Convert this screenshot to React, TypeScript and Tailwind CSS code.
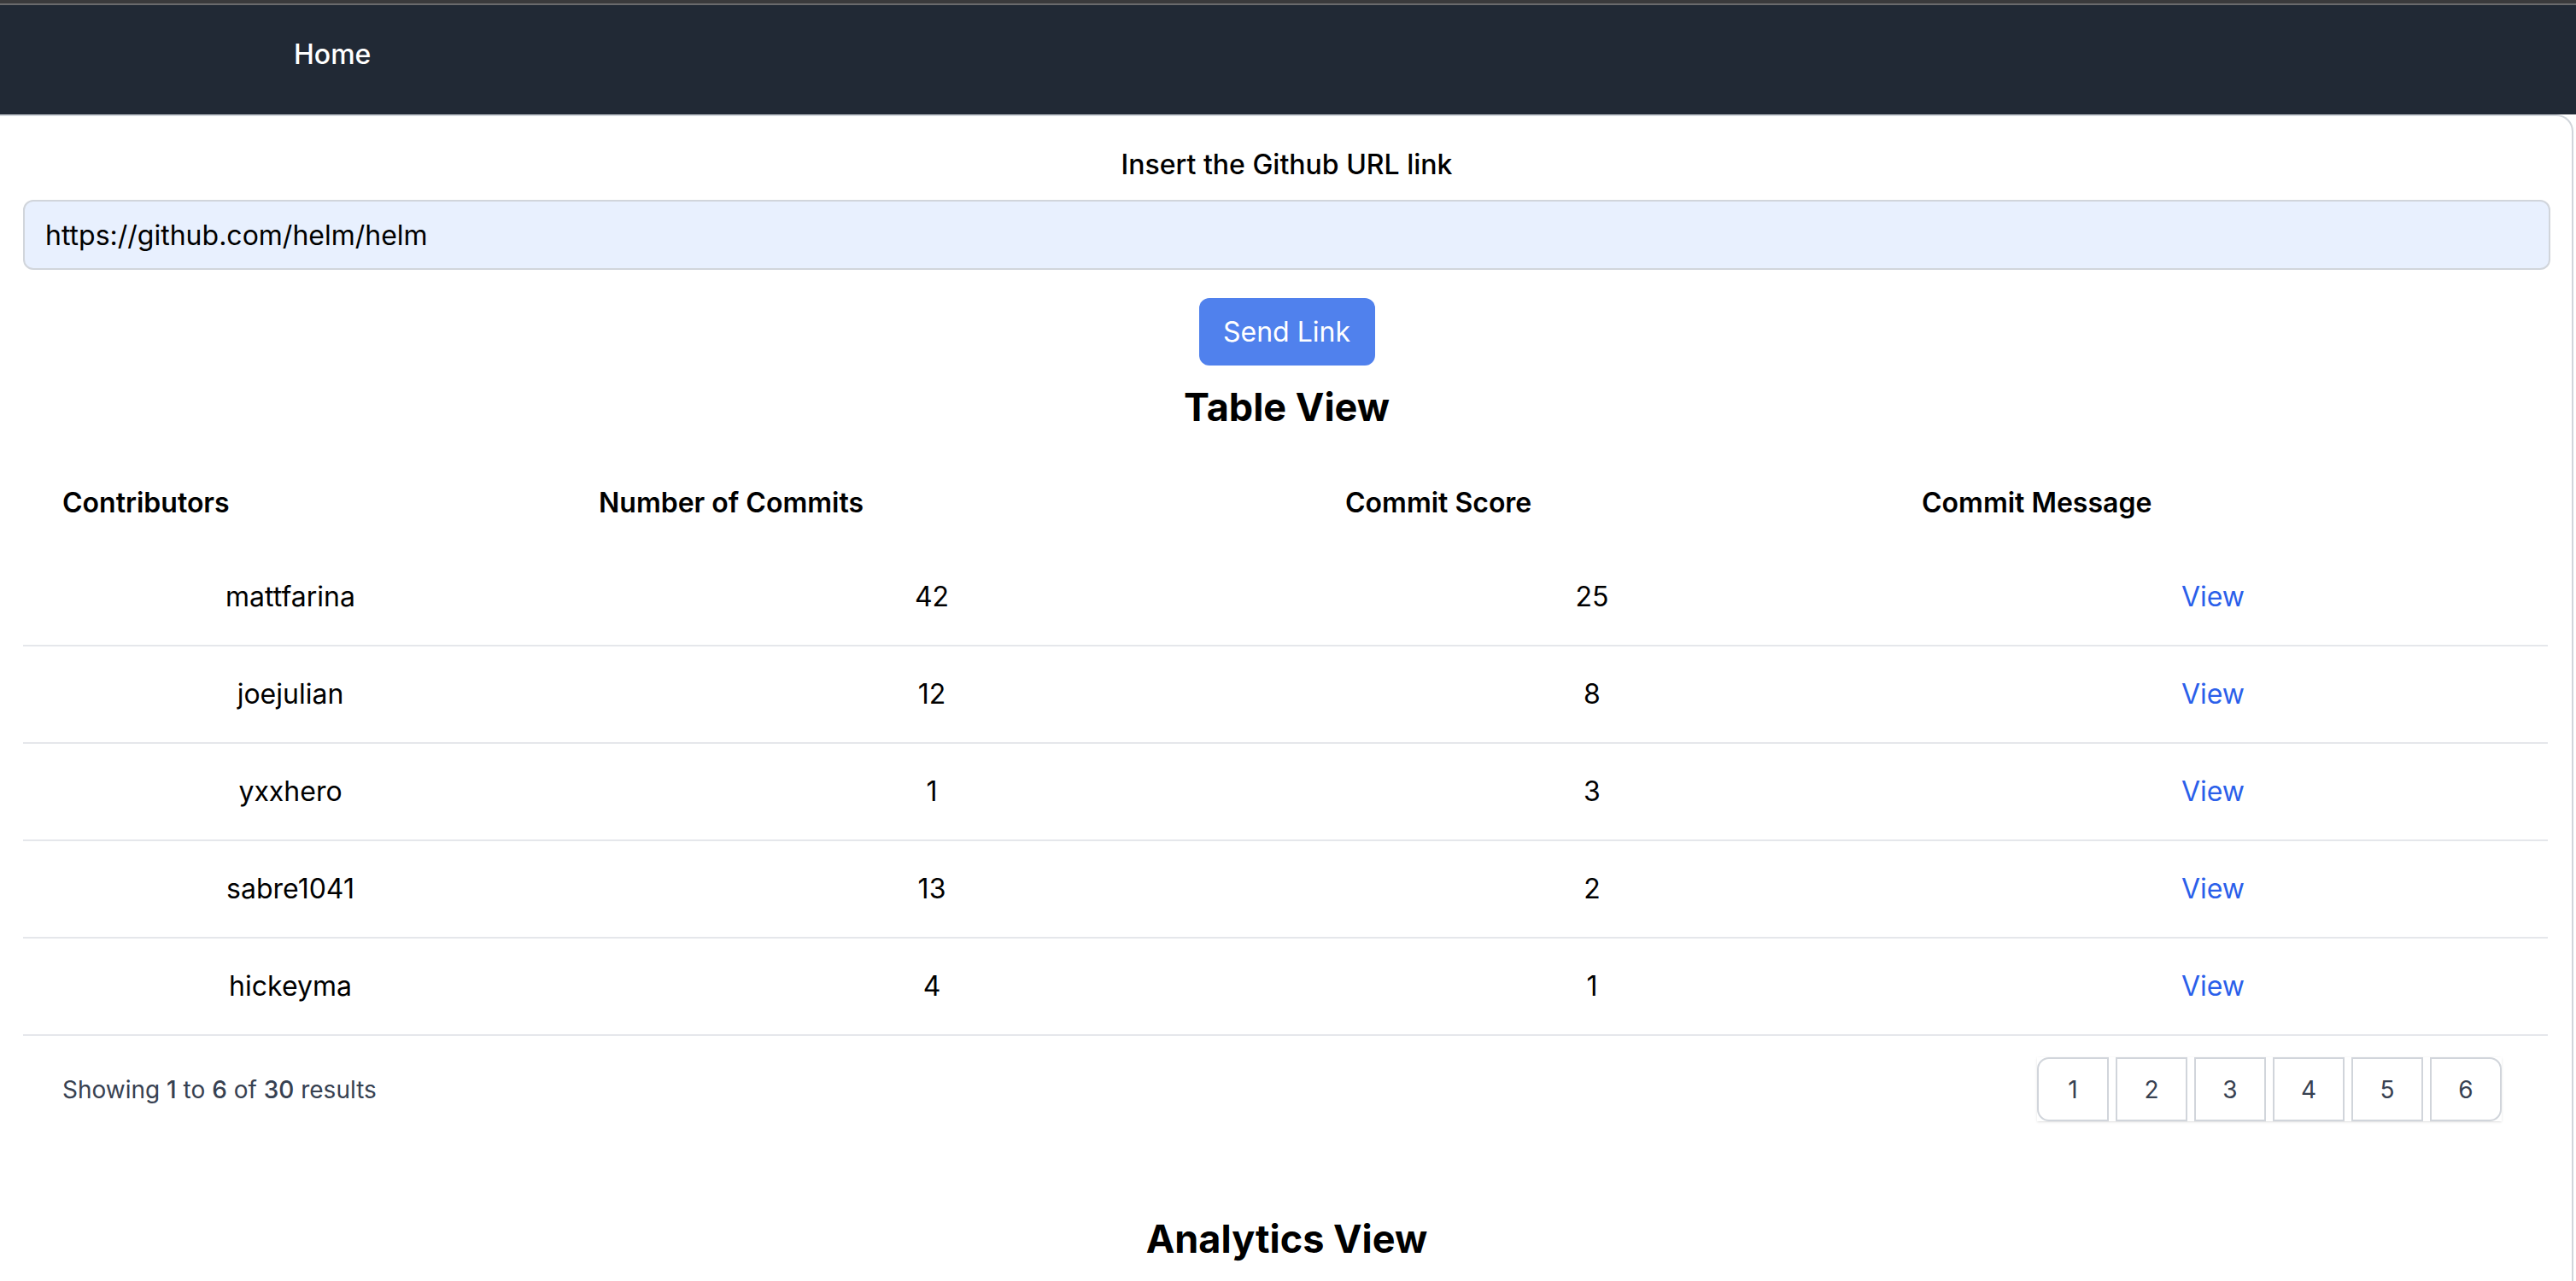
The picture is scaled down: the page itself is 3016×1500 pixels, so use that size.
import React from "react";

const rows = [
  { name: "mattfarina", commits: 42, score: 25 },
  { name: "joejulian", commits: 12, score: 8 },
  { name: "yxxhero", commits: 1, score: 3 },
  { name: "sabre1041", commits: 13, score: 2 },
  { name: "hickeyma", commits: 4, score: 1 },
];

const pages = [1, 2, 3, 4, 5, 6];

export default function App() {
  return (
    <div className="min-h-screen bg-white font-['Inter',sans-serif] text-black">
      {/* window strip */}
      <div className="h-[4px] bg-[#3a3a3c]" />
      <div className="h-[2px] bg-[#6a6a6c]" />

      {/* Navbar */}
      <nav className="h-[128px] bg-[#212935] flex items-center pl-[344px] pb-[12px]">
        <a className="text-[32px] font-medium text-white">Home</a>
      </nav>

      {/* Main card */}
      <main className="w-[3013px] border-2 border-l-0 border-[#d1d5db] rounded-tr-[20px] pl-[27px] pr-[25px] pt-[33px] pb-[60px]">
        <form className="flex flex-col items-center">
          <label className="text-[32px] leading-[48px] font-medium">Insert the Github URL link</label>
          <input
            defaultValue="https://github.com/helm/helm"
            className="mt-[17px] w-full h-[82px] bg-[#e8f0fe] border-2 border-[#d1d5db] rounded-[12px] px-[24px] text-[32px] outline-none"
          />
          <button
            type="button"
            className="mt-[33px] w-[206px] h-[79px] bg-[#5081ed] rounded-[12px] text-white text-[32px]"
          >
            Send Link
          </button>
        </form>

        <h2 className="mt-[17px] text-center text-[45px] leading-[64px] font-bold">Table View</h2>

        <table className="mt-[21px] table-fixed w-[2956px] border-collapse">
          <colgroup>
            <col className="w-[626px]" />
            <col className="w-[876px]" />
            <col className="w-[670px]" />
            <col className="w-[784px]" />
          </colgroup>
          <thead>
            <tr className="h-[112px]">
              <th className="text-left px-[46px] pt-[6px] text-[32px] font-semibold">Contributors</th>
              <th className="text-left px-[48px] pt-[6px] text-[32px] font-semibold">Number of Commits</th>
              <th className="text-left px-[46px] pt-[6px] text-[32px] font-semibold">Commit Score</th>
              <th className="text-left px-[51px] pt-[6px] text-[32px] font-semibold">Commit Message</th>
            </tr>
          </thead>
          <tbody>
            {rows.map((r) => (
              <tr key={r.name} className="h-[114px] border-b-2 border-[#e5e7eb] text-[32px] text-center">
                <td>{r.name}</td>
                <td>{r.commits}</td>
                <td>{r.score}</td>
                <td>
                  <a className="text-[#2b5fea]">View</a>
                </td>
              </tr>
            ))}
          </tbody>
        </table>

        {/* Pagination */}
        <div className="mt-[25px] w-[2956px] flex items-center justify-between pl-[46px] pr-[54px]">
          <p className="text-[28px] text-[#374151]">
            Showing <span className="font-medium">1</span> to <span className="font-medium">6</span> of{" "}
            <span className="font-medium">30</span> results
          </p>
          <div className="flex gap-[8px] shadow-sm">
            {pages.map((p, i) => (
              <button
                key={p}
                type="button"
                className={`w-[84px] h-[75px] border-2 border-[#d1d5db] text-[28px] text-[#374151] ${
                  i === 0 ? "rounded-l-[14px]" : ""
                } ${i === pages.length - 1 ? "rounded-r-[14px]" : ""}`}
              >
                {p}
              </button>
            ))}
          </div>
        </div>

        <h2 className="mt-[106px] text-center text-[45px] leading-[64px] font-bold">Analytics View</h2>
      </main>
    </div>
  );
}
